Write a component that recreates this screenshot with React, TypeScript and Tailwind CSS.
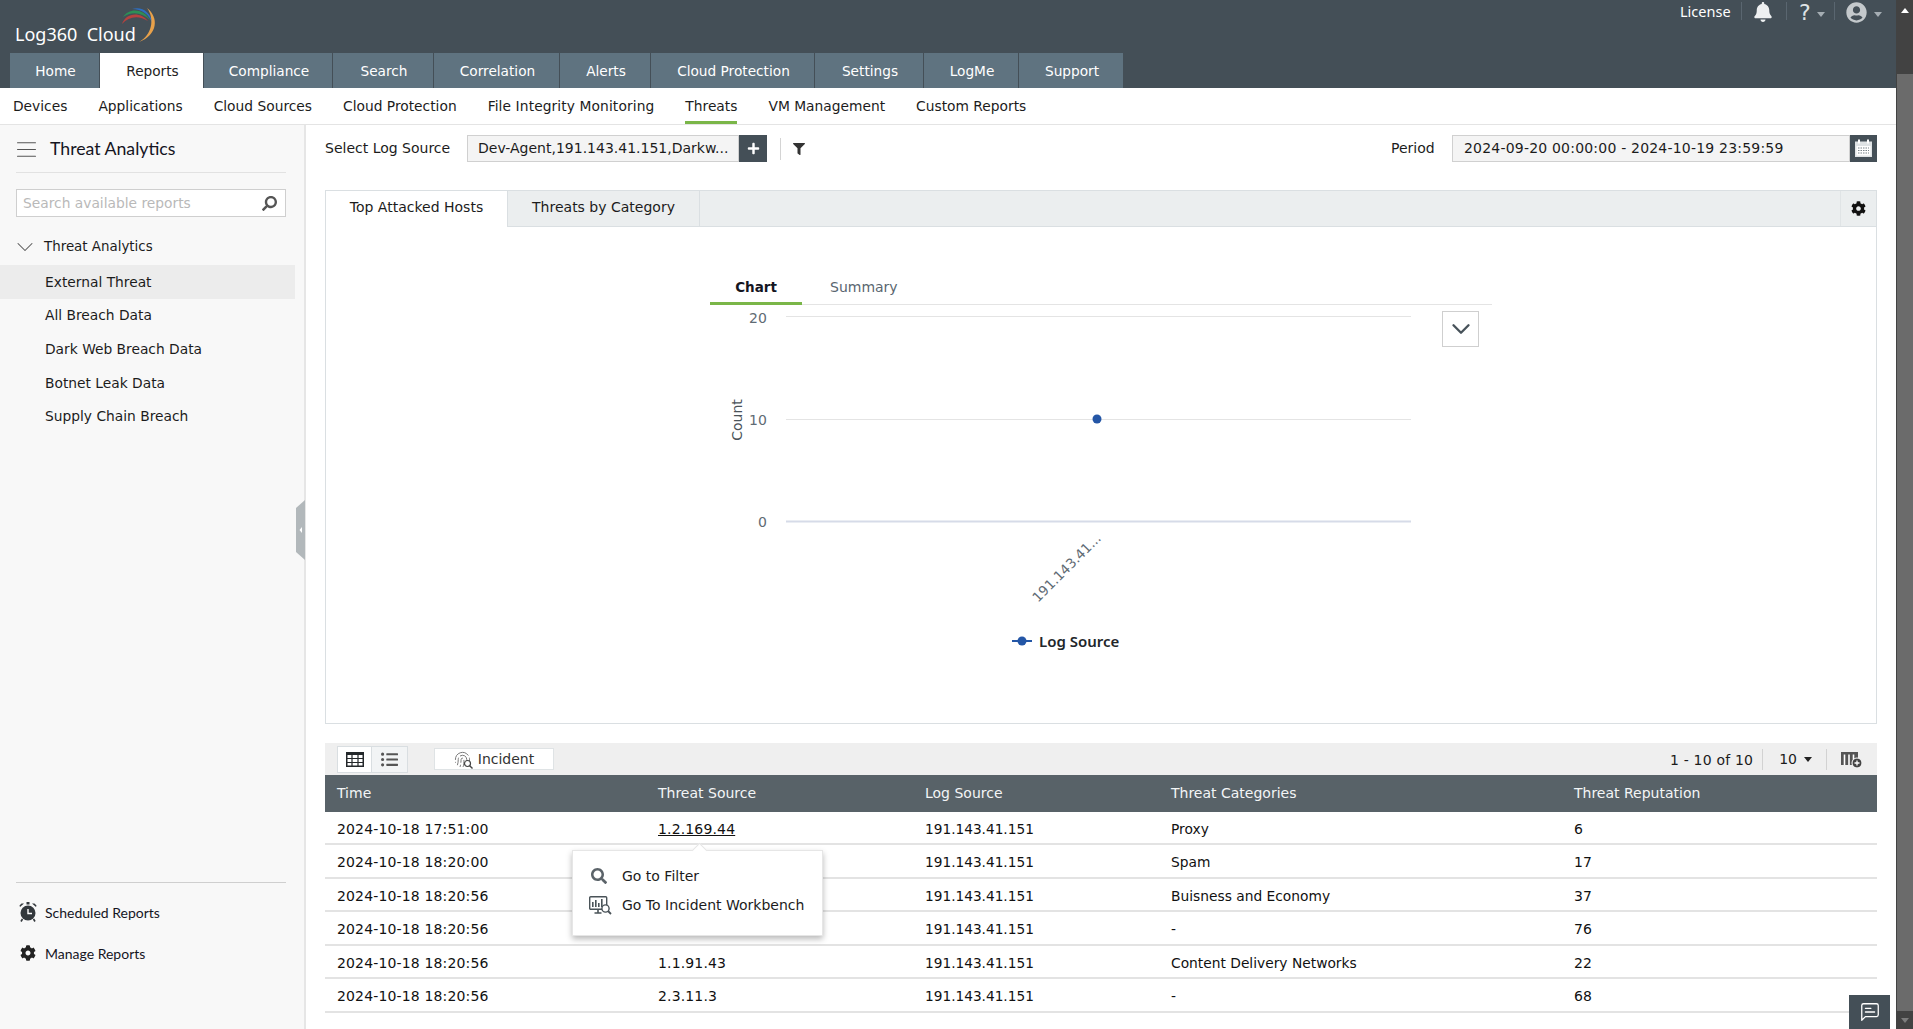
import React from "react";
import { FaBell, FaUserCircle, FaCog, FaFilter, FaPlus, FaSearch, FaListUl } from "react-icons/fa";
import { LuFingerprint, LuMessageSquareText, LuChevronDown, LuMenu } from "react-icons/lu";

const tabs = [
  ["Home", "w-[90px]"], ["Reports", "w-[104px]"], ["Compliance", "w-[129px]"], ["Search", "w-[101px]"], ["Correlation", "w-[126px]"],
  ["Alerts", "w-[91px]"], ["Cloud Protection", "w-[164px]"], ["Settings", "w-[109px]"], ["LogMe", "w-[95px]"], ["Support", "w-[105px]"],
];
const subnav = ["Devices", "Applications", "Cloud Sources", "Cloud Protection", "File Integrity Monitoring", "Threats", "VM Management", "Custom Reports"];
const reports = ["External Threat", "All Breach Data", "Dark Web Breach Data", "Botnet Leak Data", "Supply Chain Breach"];
const rows = [
  ["2024-10-18 17:51:00", "1.2.169.44", "191.143.41.151", "Proxy", "6", "h-[33px]"],
  ["2024-10-18 18:20:00", "", "191.143.41.151", "Spam", "17", "h-[34px]"],
  ["2024-10-18 18:20:56", "", "191.143.41.151", "Buisness and Economy", "37", "h-[33px]"],
  ["2024-10-18 18:20:56", "", "191.143.41.151", "-", "76", "h-[34px]"],
  ["2024-10-18 18:20:56", "1.1.91.43", "191.143.41.151", "Content Delivery Networks", "22", "h-[33px]"],
  ["2024-10-18 18:20:56", "2.3.11.3", "191.143.41.151", "-", "68", "h-[34px]"],
];

function Caret({ className }: { className: string }) {
  return <span className={`inline-block w-0 h-0 border-x-[4.5px] border-x-transparent border-t-[5px] ${className}`} />;
}

function Alarm() {
  return (
    <svg width="18" height="20" viewBox="0 0 18 20" className="shrink-0">
      <circle cx="9" cy="11" r="7.5" fill="#33383c" />
      <path d="M1 5 L5 1.5 L2.5 1.5 L0.5 3.5Z M17 5 L13 1.5 L15.5 1.5 L17.5 3.5Z" fill="#33383c" />
      <rect x="7.5" y="0" width="3" height="2.5" fill="#33383c" />
      <path d="M3.5 17 L2 19.5 M14.5 17 L16 19.5" stroke="#33383c" strokeWidth="1.6" />
      <path d="M9 7 V11.5 H13" stroke="#fff" strokeWidth="1.4" fill="none" />
    </svg>
  );
}

function Workbench() {
  return (
    <svg width="23" height="19" viewBox="0 0 23 19" className="shrink-0">
      <rect x="0.7" y="0.7" width="17" height="12.5" rx="1" fill="#fff" stroke="#4a5358" strokeWidth="1.4" />
      <rect x="3" y="6" width="1.6" height="5" fill="#4a5358" />
      <rect x="6" y="4" width="1.6" height="7" fill="#4a5358" />
      <rect x="9" y="7" width="1.6" height="4" fill="#4a5358" />
      <rect x="12" y="3" width="1.6" height="8" fill="#4a5358" />
      <path d="M9 13.5 V16.5 M5.5 17 H12.5" stroke="#4a5358" strokeWidth="1.6" />
      <circle cx="16.5" cy="12.5" r="3.6" fill="#fff" stroke="#4a5358" strokeWidth="1.4" />
      <path d="M19 15 L22 18" stroke="#4a5358" strokeWidth="1.8" />
    </svg>
  );
}

function Logo() {
  return (
    <div className="relative w-[160px] h-[53px] shrink-0">
      <span className="absolute left-[15px] top-[22px] text-[18px] leading-[24px] text-white font-['Noto_Sans',sans-serif] whitespace-nowrap">Log360&nbsp; Cloud</span>
      <svg width="40" height="44" viewBox="0 0 40 44" className="absolute left-[119px] top-[5px]">
        <path d="M3 19 C6 9 20 5 29 16 C20 10 10 11 3 19Z" fill="#b5423f" />
        <path d="M4 12 C10 3 24 3 31 15 C23 7 12 6 4 12Z" fill="#2d8f57" />
        <path d="M13 4 C22 1 32 6 34 20 C30 9 23 4 13 4Z" fill="#2d6fc4" />
        <path d="M28 3 C40 12 39 30 20 37 C33 30 36 14 28 3Z" fill="#e8a14a" />
      </svg>
    </div>
  );
}

export default function App() {
  return (
    <div className="flex h-screen w-full overflow-hidden bg-white text-[14px] text-[#1c1c1c] font-['DejaVu_Sans',sans-serif]">
      <div className="flex flex-col flex-1 min-w-0 relative">
        {/* Header */}
        <header className="h-[88px] bg-[#444f57] flex flex-col shrink-0">
          <div className="h-[53px] flex justify-between shrink-0">
            <Logo />
            <div className="flex items-start pt-[2px] pr-[14px] text-white">
              <span className="text-[14.5px] leading-[18px] w-[61px] font-['Noto_Sans',sans-serif]">License</span>
              <span className="w-px h-[18px] bg-[#5a6670]" />
              <FaBell className="ml-[11px] mr-[13px] text-[#eef0f1]" size={20} />
              <span className="w-px h-[18px] bg-[#5a6670]" />
              <span className="ml-[12px] w-[13px] text-[22px] leading-[22px] text-[#dfe3e5]">?</span>
              <Caret className="border-t-[#a5adb3] ml-[5px] mt-[10px] mr-[9px]" />
              <span className="w-px h-[18px] bg-[#5a6670]" />
              <FaUserCircle className="ml-[11px] text-[#c4c9cc]" size={21} />
              <Caret className="border-t-[#a5adb3] ml-[7px] mt-[10px]" />
            </div>
          </div>
          <nav className="flex pl-[10px] h-[35px] text-[13.7px]">
            {tabs.map(([t, w]) => (
              <div key={t} className={`${w} flex items-center justify-center border-r border-[#444f57] pt-[1px] pl-[2px] ${t === "Reports" ? "bg-white text-[#222]" : "bg-[#5f7380] text-white"}`}>{t}</div>
            ))}
          </nav>
        </header>

        {/* Sub nav */}
        <div className="h-[37px] border-b border-[#e4e4e4] flex pl-[13px] gap-[31px] shrink-0 text-[13.8px]">
          {subnav.map((s) => (
            <div key={s} className={`relative h-[36px] flex items-center whitespace-nowrap pt-[1px] ${s === "File Integrity Monitoring" ? "tracking-[0.1px]" : ""}`}>
              {s}
              {s === "Threats" && <span className="absolute left-0 right-0 bottom-0 h-[3px] bg-[#7ab648]" />}
            </div>
          ))}
        </div>

        <div className="flex flex-1 min-h-0">
          {/* Sidebar */}
          <aside className="w-[306px] shrink-0 bg-[#f8f8f8] border-r-2 border-[#e6e6e6] flex flex-col relative text-[13.8px]">
            <div className="ml-[16px] mr-[18px] h-[48px] border-b border-[#e2e2e2] flex items-center pt-[2px] shrink-0">
              <LuMenu size={27} strokeWidth={0.9} className="text-[#555] mr-[10px] -ml-[3px]" />
              <span className="text-[17.7px] text-[#15151f] font-['Lato',sans-serif]">Threat Analytics</span>
            </div>
            <div className="ml-[16px] mr-[18px] mt-[16px] h-[28px] border border-[#cfcfcf] bg-white flex items-center justify-between pl-[6px] pr-[8px] shrink-0">
              <span className="text-[#b9b9b9]">Search available reports</span>
              <FaSearch size={15} className="text-[#555] -scale-x-100" />
            </div>
            <div className="h-[34px] mt-[13px] flex items-center pl-[11px] shrink-0">
              <LuChevronDown size={28} strokeWidth={0.9} className="text-[#555] mr-[5px]" />
              <span className="text-[13.4px]">Threat Analytics</span>
            </div>
            <div className="flex flex-col mt-[1px] shrink-0">
              {reports.map((r, i) => (
                <div key={r} className={`h-[33.7px] flex items-center pl-[45px] w-[295px] ${i === 0 ? "bg-[#ececec]" : ""}`}>{r}</div>
              ))}
            </div>
            <div className="mt-auto ml-[16px] mr-[18px] border-t border-[#cfcfcf] h-[147px] pt-[19px] flex flex-col gap-[22px] font-['Lato',sans-serif] text-[#15151f] shrink-0">
              <div className="flex items-center gap-[8px] pl-[3px] h-[20px]"><Alarm /><span className="text-[14px]">Scheduled Reports</span></div>
              <div className="flex items-center gap-[9px] pl-[4px] h-[18px]"><FaCog size={16} className="text-[#222]" /><span className="text-[14px]">Manage Reports</span></div>
            </div>
            <svg width="9" height="60" viewBox="0 0 9 60" className="absolute -right-px top-[375px]">
              <path d="M9 0 L0 8 V52 L9 60Z" fill="#b2b8bb" />
              <path d="M6 27 L3.5 30 L6 33Z" fill="#fff" />
            </svg>
          </aside>

          {/* Main */}
          <main className="flex-1 min-w-0 px-[19px] flex flex-col">
            <div className="flex items-center mt-[10px] h-[27px] shrink-0">
              <span className="w-[142px]">Select Log Source</span>
              <div className="w-[272px] h-[27px] border border-[#d0d0d0] bg-[#f4f4f4] flex items-center pl-[10px]">Dev-Agent,191.143.41.151,Darkw...</div>
              <div className="w-[28px] h-[27px] bg-[#444f57] flex items-center justify-center"><FaPlus size={13} className="text-white" /></div>
              <span className="w-px h-[22px] bg-[#d4d4d4] ml-[13px]" />
              <FaFilter size={12} className="ml-[12px] text-[#333]" />
              <span className="ml-auto w-[61px]">Period</span>
              <div className="w-[398px] h-[27px] border border-[#d0d0d0] bg-[#f4f4f4] flex items-center pl-[11px] tracking-[0.2px]">2024-09-20 00:00:00 - 2024-10-19 23:59:59</div>
              <div className="w-[27px] h-[27px] bg-[#444f57] flex items-center justify-center">
                <svg width="19" height="19" viewBox="0 0 19 19">
                  <rect x="1" y="2.5" width="17" height="15.5" fill="#dfe3e5" />
                  <rect x="2.5" y="7" width="14" height="9.5" fill="#fff" />
                  <rect x="4" y="0.5" width="2" height="4" fill="#fff" />
                  <rect x="13" y="0.5" width="2" height="4" fill="#fff" />
                  <path d="M4 9 H15 M4 11.5 H15 M4 14 H15" stroke="#7b858b" strokeWidth="1.2" strokeDasharray="1.5 1" />
                </svg>
              </div>
            </div>

            {/* Chart panel */}
            <section className="mt-[28px] h-[534px] border border-[#dadfe2] flex flex-col shrink-0">
              <div className="h-[36px] bg-[#ebeeef] border-b border-[#dadfe2] flex shrink-0">
                <div className="w-[182px] bg-white border-r border-[#dadfe2] flex items-center justify-center h-[36px] pb-[4px]">Top Attacked Hosts</div>
                <div className="w-[192px] border-r border-[#dadfe2] flex items-center justify-center pb-[3px]">Threats by Category</div>
                <div className="ml-auto w-[36px] border-l border-[#e0e4e6] flex items-center justify-center"><FaCog size={15} className="text-[#111]" /></div>
              </div>
              <div className="relative flex-1 min-h-0">
                <div className="ml-[384px] mt-[51px] w-[782px] h-[27px] border-b border-[#e4e4e4] flex">
                  <div className="w-[92px] h-[27px] border-b-[3px] border-[#7ab648] flex items-center justify-center font-bold text-[13.5px] text-[#15151f] pb-[5px]">Chart</div>
                  <div className="ml-[28px] h-[27px] flex items-center text-[#5a6670] pb-[8px]">Summary</div>
                </div>
                <svg width="760" height="300" viewBox="0 0 760 300" className="ml-[384px] mt-[1px] font-['DejaVu_Sans',sans-serif]">
                  <g fontSize="14" fill="#5f6b74">
                    <text x="39" y="17">20</text>
                    <text x="39" y="119">10</text>
                    <text x="48" y="221">0</text>
                    <text x="27" y="119" textAnchor="middle" fill="#4a5359" transform="rotate(-90 27 114)">Count</text>
                  </g>
                  <path d="M76 10.5 H701 M76 113.5 H701" stroke="#e4e4e4" />
                  <path d="M76 215.5 H701" stroke="#d6dbe8" strokeWidth="2" />
                  <circle cx="387" cy="113" r="4.5" fill="#2456a6" />
                  <text x="328" y="297" fontSize="13.5" fill="#5f6b74" transform="rotate(-45 328 297)">191.143.41...</text>
                </svg>
                <div className="absolute left-[1116px] top-[84px] w-[37px] h-[36px] border border-[#cfcfcf] bg-white flex items-center justify-center">
                  <LuChevronDown size={30} strokeWidth={1.9} className="text-[#47525a]" />
                </div>
                <div className="absolute left-[686px] top-[403px] flex items-center">
                  <svg width="20" height="10" viewBox="0 0 20 10"><path d="M0 5H20" stroke="#2456a6" strokeWidth="2" /><circle cx="10" cy="5" r="4.5" fill="#2456a6" /></svg>
                  <span className="ml-[7px] text-[15px] font-semibold text-[#22262a] font-['Noto_Sans',sans-serif]">Log Source</span>
                </div>
              </div>
            </section>

            {/* Table */}
            <div className="mt-[19px] h-[32px] bg-[#efefef] flex items-center pl-[12px] pr-[15px] shrink-0">
              <div className="flex h-[27px] border border-[#d9dee1] bg-white">
                <div className="w-[34px] flex items-center justify-center border-r border-[#d9dee1]">
                  <svg width="18" height="15" viewBox="0 0 18 15">
                    <rect x="0.75" y="0.75" width="16.5" height="13.5" fill="none" stroke="#23272a" strokeWidth="1.5" />
                    <rect x="0" y="0" width="18" height="3" fill="#23272a" />
                    <path d="M0 6.5H18 M0 10.5H18 M6 2V14 M12 2V14" stroke="#23272a" strokeWidth="1.2" />
                  </svg>
                </div>
                <div className="w-[35px] flex items-center justify-center bg-[#f2f4f5]"><FaListUl size={17} className="text-[#555]" /></div>
              </div>
              <div className="ml-[26px] w-[120px] h-[22px] border border-[#dfe3e5] bg-white flex items-center justify-center gap-[7px] text-[#333]">
                <span className="relative w-[17px] h-[17px]">
                  <LuFingerprint size={17} strokeWidth={1.4} className="text-[#777]" />
                  <svg width="10" height="10" viewBox="0 0 10 10" className="absolute -right-[2px] -bottom-[1px]">
                    <circle cx="4.5" cy="4.5" r="3" fill="#fff" stroke="#444" strokeWidth="1.2" />
                    <path d="M6.7 6.7 L9.5 9.5" stroke="#444" strokeWidth="1.4" />
                  </svg>
                </span>
                <span className="pt-[1px]">Incident</span>
              </div>
              <span className="ml-auto tracking-[0.2px] pt-[2px]">1 - 10 of 10</span>
              <span className="w-px h-[21px] bg-[#d2d2d2] ml-[9px]" />
              <span className="ml-[16px]">10</span>
              <Caret className="border-t-[#222] ml-[7px]" />
              <span className="w-px h-[21px] bg-[#d2d2d2] ml-[14px]" />
              <svg width="21" height="17" viewBox="0 0 21 17" className="ml-[14px]">
                <rect x="0" y="1" width="17" height="13" fill="#555" />
                <path d="M3.5 3.5 V14 M8 3.5 V14 M12.5 3.5 V14" stroke="#fff" strokeWidth="1.6" />
                <circle cx="16" cy="12" r="5" fill="#444" stroke="#fff" />
                <path d="M16 9.5 V14.5 M13.5 12 H18.5" stroke="#fff" strokeWidth="1.3" />
              </svg>
            </div>
            <div className="h-[37px] bg-[#586268] text-[#f3f5f6] flex items-center shrink-0">
              <div className="w-[333px] pl-[12px]">Time</div>
              <div className="w-[267px]">Threat Source</div>
              <div className="w-[246px]">Log Source</div>
              <div className="w-[403px]">Threat Categories</div>
              <div>Threat Reputation</div>
            </div>
            {rows.map((r, i) => (
              <div key={i} className={`${r[5]} border-b-2 border-[#e3e3e3] flex items-center pt-[3px] text-[#111] shrink-0`}>
                <div className="w-[333px] pl-[12px] tracking-[0.15px]">{r[0]}</div>
                <div className={`w-[267px] tracking-[0.15px] ${i === 0 ? "underline" : ""}`}>{r[1]}</div>
                <div className="w-[246px] text-[13.7px]">{r[2]}</div>
                <div className="w-[403px] text-[13.8px]">{r[3]}</div>
                <div>{r[4]}</div>
              </div>
            ))}
          </main>
        </div>

        {/* Popup menu */}
        <div className="absolute left-[572px] top-[850px] w-[251px] h-[86px] bg-white border border-[#e6e6e6] shadow-[0_3px_6px_rgba(0,0,0,0.28)] flex flex-col justify-center gap-[10px] pl-[16px] pb-[5px]">
          <div className="absolute left-[121px] -top-[6px] w-[11px] h-[11px] bg-white rotate-45 border-l border-t border-[#e6e6e6]" />
          <div className="flex items-center h-[19px]">
            <span className="w-[33px] pl-[2px]"><FaSearch size={16} className="text-[#5b6369]" /></span>
            <span>Go to Filter</span>
          </div>
          <div className="flex items-center h-[19px]">
            <span className="w-[33px]"><Workbench /></span>
            <span>Go To Incident Workbench</span>
          </div>
        </div>

        {/* Chat */}
        <div className="absolute left-[1849px] top-[995px] w-[41px] h-[34px] bg-[#444f57] flex items-center justify-center">
          <LuMessageSquareText size={22} strokeWidth={1.4} className="text-white" />
        </div>
      </div>

      {/* Scrollbar */}
      <div className="w-[17px] shrink-0 bg-[#424242] flex flex-col">
        <div className="h-[74px] flex justify-center pt-[8px]"><span className="w-0 h-0 border-x-[4.5px] border-x-transparent border-b-[5px] border-b-white" /></div>
        <div className="flex-1 bg-[#6b6b6b] ml-[1px]" />
        <div className="h-[18px] flex justify-center items-center"><span className="w-0 h-0 border-x-[4.5px] border-x-transparent border-t-[5px] border-t-[#7c7c7c]" /></div>
      </div>
    </div>
  );
}
